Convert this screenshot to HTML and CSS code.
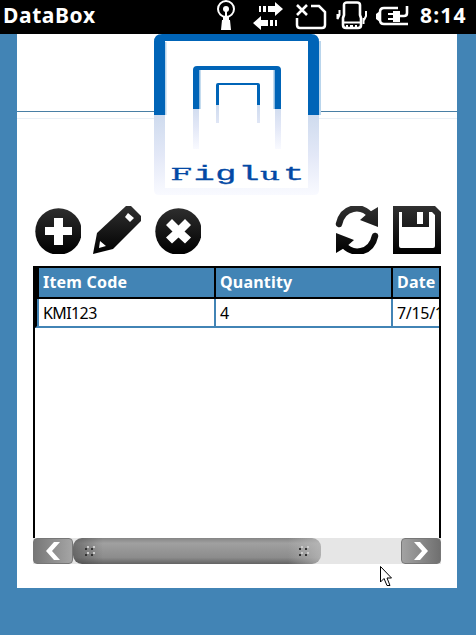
FILE: index.html
```html
<!DOCTYPE html>
<html lang="en">
<head>
<meta charset="utf-8">
<title>DataBox</title>
<link rel="stylesheet" href="styles.css">
</head>
<body>
<header class="status">
  <span class="title">DataBox</span>
  <svg class="status-icons" width="196" height="34" viewBox="215 0 196 34" fill="none" stroke="#fff">
    <circle cx="226" cy="9" r="8" stroke-width="2"/><circle cx="226" cy="9" r="3" fill="#fff" stroke="none"/>
    <path d="M225 10h2v6h2v4h1l1 10h-10l1-10h1v-4h2z" fill="#fff" stroke="none"/>
    <g fill="#fff" stroke="none"><path d="M259 6h2v6h-2zM263 6h3v6h-3zM268 6h7V2l8 7-8 7v-4h-7zM275 20h2v6h-2zM270 20h3v6h-3zM268 20h-7v-4l-8 7 8 7v-4h7z"/></g>
    <path d="M297 5l10 10M307 5l-10 10" stroke-width="2.600"/><path d="M311 6h8l6 6v13q0 3-3 3h-22q-3 0-3-3v-7" stroke-width="2.500"/>
    <path d="M344 15V5q0-2.500 3-2.500h10q3 0 3 2.500v10l1 3v7q0 3-3 3h-12q-3 0-3-3v-7z" stroke-width="2.600"/><path d="M343 22.500h17M346 26h2m2 0h3m2 0h2" stroke-width="2"/><path d="M339.500 10v5l-2 4v-5M363.500 18v6M366 11v5l-2 4" stroke-width="2"/>
    <path d="M398 8h-14q-4 0-4 4v8q0 4 4 4h24M400 16h4q3 0 3-3V6" stroke-width="2.600"/><path d="M380 11v11l-4-3v-5z" fill="#fff" stroke="none"/><path d="M393 11h7v11h-7v-2h-5v-2h5v-3h-5v-2h5z" fill="#fff" stroke="none"/>
  </svg>
  <span class="clock">8:14</span>
</header>
<main class="page">
  <div class="brand">
    <svg width="440" height="166" viewBox="17 34 440 166">
      <defs>
        <linearGradient id="fade" x1="0" y1="0" x2="0" y2="1"><stop offset="0" stop-color="#cfdbee"/><stop offset=".5" stop-color="#e3e8f7"/><stop offset="1" stop-color="#f9faff"/></linearGradient>
      </defs>
      <path d="M17 111.500h137M319 111.500h138" stroke="#497fa5"/>
      <path d="M17 118.500h137M319 118.500h138" stroke="#eaf0f6"/>
      <path d="M154 115h11v73h143v-73h11v75q0 5-5 5h-155q-5 0-5-5z" fill="url(#fade)"/>
      <path d="M193 109h6v40h-6zM275 109h6v40h-6zM216 105h3v18h-3zM257 105h3v18h-3z" fill="url(#fade)"/>
      <path d="M165.500 42v73M320 41v74" stroke="#b9d5ec" stroke-width="2"/>
      <path d="M154 115V42q0-8 8-8h149q8 0 8 8v73h-11V41H165v74z" fill="#0064b7"/>
      <path d="M199.500 70v39M274.500 70v39" stroke="#8cb9df" stroke-width="2"/>
      <path d="M193 109V70q0-4 4-4h80q4 0 4 4v39h-6V70h-76v39z" fill="#0064b7"/>
      <path d="M216 105V85q0-2 2-2h40q2 0 2 2v20h-3V85h-38v20z" fill="#0064b7"/>
      <text class="wordmark" transform="translate(170.500 180) scale(1.770 1)" x="0 13 25.300 38.300 50.500 63.500" y="0"><tspan class="slab">F</tspan>igl<tspan class="slab">u</tspan>t</text>
    </svg>
  </div>
  <nav class="tools">
    <svg width="46" height="48" viewBox="35 206 46 48"><circle cx="58.500" cy="231.500" r="23.200" fill="url(#ink)"/><path d="M54 218h9v9h9v8h-9v10h-9v-10h-9v-8h9z" fill="#fff"/>
      <defs><linearGradient id="ink" gradientUnits="userSpaceOnUse" x1="0" y1="206" x2="0" y2="254"><stop offset="0" stop-color="#303030"/><stop offset="1" stop-color="#000"/></linearGradient></defs></svg>
    <svg class="pencil" width="48" height="48" viewBox="93 206 48 48"><path d="M93 254l4-21 29-27h5l10 10v5l-28 28z" fill="url(#ink)"/><path d="M128 213l6 5-4 4-5-5zM100 241l6 5-7 2z" fill="#fff"/></svg>
    <svg class="remove" width="46" height="48" viewBox="155 206 46 48"><circle cx="178.500" cy="231.500" r="23.200" fill="url(#ink)"/><path d="M172 219l6.500 6.500 6.500-6.500 6 6-6.500 6.500 6.500 6-6 6-6.500-6-6.500 6-6-6 6.500-6-6.500-6.500z" fill="#fff"/></svg>
    <svg class="sync" width="44" height="48" viewBox="335 206 44 48"><path d="M339 224C343 206 362 204 371 216M375 236C371 254 352 256 343 244" fill="none" stroke="url(#ink)" stroke-width="6.500" stroke-linecap="round"/><path d="M378 207v20l-18-7 8-7zM336 253v-20l18 7-8 7z" fill="url(#ink)"/></svg>
    <svg class="save" width="48" height="48" viewBox="393 206 48 48"><path d="M393 206h42l6 6v42h-48z" fill="url(#ink)"/><path d="M399 212h3v15h27v-15h3l3 3v31q0 2-2 2h-32q-2 0-2-2zM417 212h6v12h-6z" fill="#fff"/></svg>
  </nav>
  <section class="grid">
    <div class="row head"><span>Item Code</span><span>Quantity</span><span>Date</span></div>
    <div class="row data"><span>KMI123</span><span>4</span><span class="date">7/15/1</span></div>
  </section>
  <div class="scroll">
    <div class="btn left"><svg width="40" height="26" viewBox="0 0 40 26"><path d="M27 4h-6l-8 9 8 9h6l-8-9z" fill="#fff"/></svg></div>
    <div class="thumb">
      <svg width="12" height="11" viewBox="0 0 12 11"><path d="M0 2h2v2H0zM6 2h2v2H6zM0 8h2v2H0zM6 8h2v2H6z" fill="#333"/><path d="M2 0h2v2H2zM8 0h2v2H8zM2 6h2v2H2zM8 6h2v2H8z" fill="#ccc"/></svg>
      <svg width="12" height="11" viewBox="0 0 12 11"><path d="M0 2h2v2H0zM6 2h2v2H6zM0 8h2v2H0zM6 8h2v2H6z" fill="#333"/><path d="M2 0h2v2H2zM8 0h2v2H8zM2 6h2v2H2zM8 6h2v2H8z" fill="#ccc"/></svg>
    </div>
    <div class="btn right"><svg width="40" height="26" viewBox="0 0 40 26"><path d="M13 4h6l8 9-8 9h-6l8-9z" fill="#fff"/></svg></div>
  </div>
</main>
<svg class="cursor" width="13" height="21" viewBox="0 0 13 21"><path d="M.5.500v15.500l3.500-3.500 3 7h3l-3-7.500h4.500z" fill="#fff" stroke="#000"/></svg>
</body>
</html>
```

FILE: styles.css
```css
* { box-sizing: border-box; }
body {
  margin: 0;
  width: 476px;
  height: 635px;
  overflow: hidden;
  background: #4284b5;
  font-family: "Noto Sans", sans-serif;
  color: #000;
}
svg { display: block; flex: none; }
.status {
  display: flex;
  height: 34px;
  padding-left: 3px;
  background: #000;
  color: #fff;
  font-weight: 700;
  font-size: 21px;
  line-height: 31px;
}
.title { width: 212px; letter-spacing: 0.6px; }
.clock { padding-left: 9px; letter-spacing: 1.2px; }
.page {
  width: 440px;
  height: 554px;
  margin-left: 17px;
  background: #fff;
}
.brand { height: 172px; }
.wordmark {
  font-family: "Liberation Mono", monospace;
  font-size: 20px;
  fill: #0349a5;
  stroke: #0349a5;
  stroke-width: .3px;
}
.slab { font-family: "DejaVu Serif", serif; font-size: 17.5px; }
.tools { display: flex; height: 60px; padding-left: 18px; }
.pencil { margin-left: 12px; }
.remove { margin-left: 14px; }
.sync { margin-left: 134px; }
.save { margin-left: 14px; }
.grid {
  width: 408px;
  height: 272px;
  margin-left: 16px;
  border: solid #000;
  border-width: 2px 2px 0;
  overflow: hidden;
}
.row {
  display: grid;
  grid-template-columns: 177px 177px 177px;
  white-space: nowrap;
  font-size: 16px;
}
.row span { padding-left: 4px; border-right: 2px solid #000; }
.head {
  height: 31px;
  padding-left: 4px;
  border-bottom: 2px solid #000;
  background: linear-gradient(90deg, #000 4px, #4284b5 4px);
  color: #fff;
  font-weight: 700;
  line-height: 28px;
  letter-spacing: 0.2px;
}
.data {
  height: 29px;
  border-left: 2px solid #000;
  border-bottom: 2px solid #4284b5;
  line-height: 28px;
  letter-spacing: -0.6px;
}
.data .date { letter-spacing: -0.3px; }
.data span { border-color: #4284b5; }
.data span:first-child { border-left: 2px solid #4284b5; padding-left: 4px; margin-right: -2px; }
.data span + span { margin-left: 2px; margin-right: -2px; }
.scroll { display: flex; width: 408px; height: 26px; margin-left: 16px; background: #e6e6e6; }
.btn { width: 40px; height: 26px; border: 1px solid #777; border-radius: 4px; }
.btn svg { margin: -1px; }
.left { background: linear-gradient(90deg, #777, #a5a5a5); }
.right { margin-left: auto; background: linear-gradient(90deg, #a2a2a2, #707070); }
.thumb {
  display: flex;
  justify-content: space-between;
  align-items: center;
  width: 248px;
  padding: 0 10px 0 12px;
  border-radius: 9px;
  background: linear-gradient(90deg, rgba(60,60,60,.5), transparent 30px, transparent 215px, rgba(190,190,190,.7)), linear-gradient(#858585, #a0a0a0 20%, #8c8c8c 75%, #636363);
}
.cursor { position: absolute; left: 380px; top: 566px; }
```
